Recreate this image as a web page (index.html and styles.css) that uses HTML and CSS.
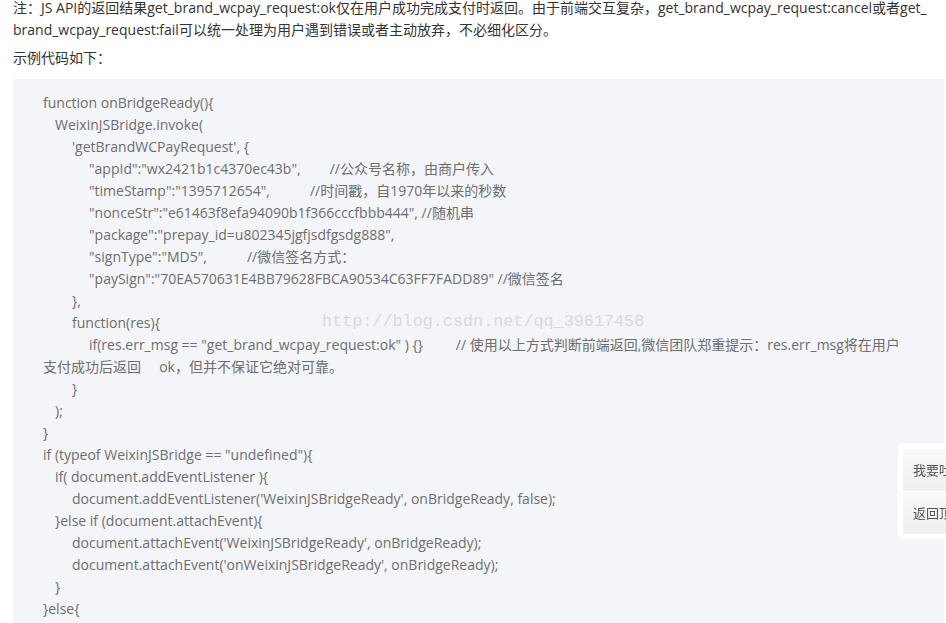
FILE: index.html
```
<!DOCTYPE html>
<html lang="zh-CN">
<head>
    <meta charset="UTF-8">
    <meta name="viewport" content="width=device-width, initial-scale=1.0">
    <title>微信支付 JS API</title>
    <link rel="stylesheet" href="styles.css">
</head>
<body>
    <div class="article">
        <p class="note">注：JS API的返回结果get_brand_wcpay_request:ok仅在用户成功完成支付时返回。由于前端交互复杂，get_brand_wcpay_request:cancel或者get_<br>brand_wcpay_request:fail可以统一处理为用户遇到错误或者主动放弃，不必细化区分。</p>
        <p class="lead">示例代码如下：</p>
        <div class="code">
            <div class="line">function onBridgeReady(){</div>
            <div class="line i1">WeixinJSBridge.invoke(</div>
            <div class="line i2">'getBrandWCPayRequest', {</div>
            <div class="line i3">"appId":"wx2421b1c4370ec43b",        //公众号名称，由商户传入</div>
            <div class="line i3">"timeStamp":"1395712654",           //时间戳，自1970年以来的秒数</div>
            <div class="line i3">"nonceStr":"e61463f8efa94090b1f366cccfbbb444", //随机串</div>
            <div class="line i3">"package":"prepay_id=u802345jgfjsdfgsdg888",</div>
            <div class="line i3">"signType":"MD5",           //微信签名方式：</div>
            <div class="line i3">"paySign":"70EA570631E4BB79628FBCA90534C63FF7FADD89" //微信签名</div>
            <div class="line i2">},</div>
            <div class="line i2">function(res){</div>
            <div class="line i3">if(res.err_msg == "get_brand_wcpay_request:ok" ) {}         // 使用以上方式判断前端返回,微信团队郑重提示：res.err_msg将在用户</div>
            <div class="line">支付成功后返回     ok，但并不保证它绝对可靠。</div>
            <div class="line i2">}</div>
            <div class="line i1">);</div>
            <div class="line">}</div>
            <div class="line">if (typeof WeixinJSBridge == "undefined"){</div>
            <div class="line i1">if( document.addEventListener ){</div>
            <div class="line i2">document.addEventListener('WeixinJSBridgeReady', onBridgeReady, false);</div>
            <div class="line i1">}else if (document.attachEvent){</div>
            <div class="line i2">document.attachEvent('WeixinJSBridgeReady', onBridgeReady);</div>
            <div class="line i2">document.attachEvent('onWeixinJSBridgeReady', onBridgeReady);</div>
            <div class="line i1">}</div>
            <div class="line">}else{</div>
            <div class="line i1">onBridgeReady();</div>
            <div class="line">}</div>
            <div class="watermark">http://blog.csdn.net/qq_39617458</div>
        </div>
    </div>

    <div class="side-tools">
        <a class="tool" href="#">我要吐槽</a>
        <a class="tool" href="#">返回顶部</a>
    </div>
</body>
</html>
```

FILE: styles.css
```
body {
    margin: 0;
    padding: 0 2px 0 13px;
    background: #ffffff;
    font-family: "Open Sans", "Noto Sans CJK SC", sans-serif;
    font-size: 14px;
    line-height: 22px;
    color: #333;
    overflow: hidden;
}
.article {
    margin-top: -3px;
}
.note {
    margin: 0;
    white-space: nowrap;
}
.lead {
    margin: 6px 0 10px;
}
.code {
    position: relative;
    background: #f4f5f9;
    padding: 13px 20px 20px 30px;
    color: #6e6e6e;
}
.line {
    white-space: pre;
}
.i1 {
    padding-left: 12px;
}
.i2 {
    padding-left: 29px;
}
.i3 {
    padding-left: 46px;
}
.watermark {
    position: absolute;
    left: 309px;
    top: 232px;
    font-family: "Liberation Mono", monospace;
    font-size: 16.8px;
    color: #d9d9d9;
    white-space: nowrap;
}
.side-tools {
    position: fixed;
    top: 443px;
    left: 898px;
    width: 60px;
    padding: 6px 0 5px 5px;
    background: #ffffff;
    border-radius: 5px;
}
.tool {
    display: block;
    height: 42px;
    line-height: 42px;
    padding-left: 10px;
    font-size: 13px;
    color: #555;
    text-decoration: none;
    white-space: nowrap;
    background: linear-gradient(#f9f9f9, #efefef);
}
.tool + .tool {
    border-top: 1px solid #ffffff;
}
```
